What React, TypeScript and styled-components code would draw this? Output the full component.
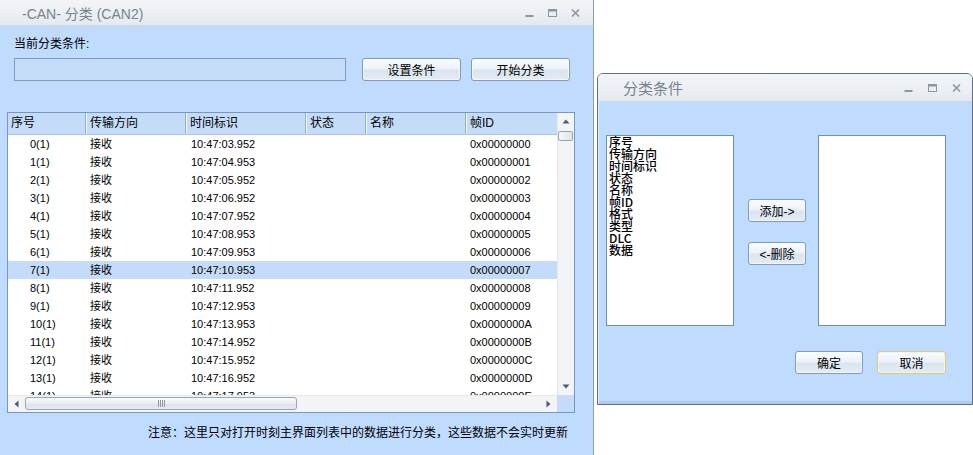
import styled, { createGlobalStyle } from "styled-components"

const GlobalStyle = createGlobalStyle`
  body {
    margin: 0;
    background: #fff;
    font-family: "Liberation Sans", "Noto Sans CJK SC", sans-serif;
  }
`

const Desktop = styled.div`
  display: flex;
  align-items: flex-start;
  width: 973px;
  height: 455px;
  overflow: hidden;
`

const MainWindow = styled.div`
  width: 593px;
  flex-shrink: 0;
  border-right: 1px solid #8f9cac;
  box-shadow: inset -1px 0 #dde4ec;
`

const TitleBar = styled.div<{ $h: number; $pl: number; $pr: number }>`
  height: ${p => p.$h}px;
  display: flex;
  align-items: center;
  padding: 0 ${p => p.$pr}px 0 ${p => p.$pl}px;
  background: linear-gradient(#f3f5f8, #e5e9ef);
  border-bottom: 1px solid #ccd9e8;
`

const TitleText = styled.div<{ $size: number }>`
  flex: 1;
  color: #77838f;
  font-size: ${p => p.$size}px;
`

const Controls = styled.div<{ $gap: number }>`
  display: flex;
  align-items: center;
  gap: ${p => p.$gap}px;
`

const Ctl = styled.svg`
  display: block;
  width: 11px;
  height: 10px;
`

const WinControls = ({ gap }: { gap: number }) => (
  <Controls $gap={gap}>
    <Ctl viewBox="0 0 11 10">
      <rect x="1.5" y="7" width="8" height="2" fill="#8a96a4" />
    </Ctl>
    <Ctl viewBox="0 0 11 10">
      <rect x="1.5" y="1.5" width="8" height="7" fill="none" stroke="#8a96a4" />
      <rect x="1" y="1" width="9" height="2.5" fill="#8a96a4" />
    </Ctl>
    <Ctl viewBox="0 0 11 10">
      <path d="M2 1.5 L9 8.5 M9 1.5 L2 8.5" stroke="#8a96a4" strokeWidth="1.6" />
    </Ctl>
  </Controls>
)

const MainBody = styled.div`
  position: relative;
  height: 444px;
  background: #bfdbfe;
  padding: 11px 0 0 7px;
  box-sizing: border-box;
`

const Label = styled.div`
  margin-left: 7px;
  font-size: 12px;
  line-height: 14px;
  color: #000;
`

const TopRow = styled.div`
  display: flex;
  align-items: center;
  margin: 7px 0 0 7px;
`

const ConditionInput = styled.div`
  width: 332px;
  height: 23px;
  box-sizing: border-box;
  border: 1px solid #7b9cc6;
  background: #c6ddfa;
  margin-right: 16px;
`

const Button = styled.button<{ $w: number; $focus?: boolean; $ml?: number }>`
  width: ${p => p.$w}px;
  height: 23px;
  margin-left: ${p => p.$ml ?? 0}px;
  padding: 0;
  box-sizing: border-box;
  border: 1px solid ${p => (p.$focus ? "#dcc98a" : "#7f9bbf")};
  border-radius: 3px;
  background: linear-gradient(#fafcfe 0%, #edf2f8 45%, #dae4f0 55%, #e4ebf4 100%);
  box-shadow: inset 0 0 0 1px ${p => (p.$focus ? "#fbf3d6" : "rgba(255,255,255,0.6)")};
  font-family: "Liberation Sans", "Noto Sans CJK SC", sans-serif;
  font-size: 12px;
  color: #000;
`

const ListBox = styled.div`
  margin-top: 31px;
  width: 568px;
  height: 301px;
  box-sizing: border-box;
  border: 1px solid #7896bf;
  background: #fff;
  display: grid;
  grid-template-columns: 1fr 17px;
  grid-template-rows: 1fr 17px;
`

const TableArea = styled.div`
  overflow: hidden;
`

const HeaderRow = styled.div`
  display: flex;
  height: 22px;
  box-sizing: border-box;
  background: #c5dcf8;
  border-bottom: 1px solid #aac3e2;
`

const HeaderCell = styled.div<{ $w: number }>`
  flex: 0 0 ${p => p.$w}px;
  box-sizing: border-box;
  padding-left: 3px;
  font-size: 12px;
  line-height: 21px;
  color: #000;
  box-shadow: inset -1px 0 #f4f8fd, inset -2px 0 #8fadd3;
  white-space: nowrap;
`

const Row = styled.div<{ $sel?: boolean }>`
  display: flex;
  height: 18px;
  background: ${p => (p.$sel ? "#c4dcfa" : "transparent")};
`

const Cell = styled.div<{ $w: number; $pl: number }>`
  flex: 0 0 ${p => p.$w}px;
  box-sizing: border-box;
  padding-left: ${p => p.$pl}px;
  font-size: 11px;
  line-height: 18px;
  color: #000;
  white-space: nowrap;
`

const VScroll = styled.div`
  display: flex;
  flex-direction: column;
  background: #f3f4f6;
  box-shadow: inset 1px 0 #e6e8eb;
`

const ArrowBox = styled.div`
  flex: 0 0 17px;
  height: 17px;
  display: flex;
  align-items: center;
  justify-content: center;
`

const VThumb = styled.div`
  margin: 1px 1px 0;
  height: 8px;
  border: 1px solid #98a5b6;
  border-radius: 2px;
  background: linear-gradient(90deg, #f7f8fa, #dfe4ea);
`

const Track = styled.div`
  flex: 1;
`

const HScroll = styled.div`
  display: flex;
  align-items: center;
  background: #f3f4f6;
  box-shadow: inset 0 1px #e6e8eb;
`

const HThumb = styled.div`
  width: 272px;
  height: 13px;
  box-sizing: border-box;
  border: 1px solid #98a5b6;
  border-radius: 3px;
  background: linear-gradient(#f9fafb, #e9edf1 50%, #dde2e8 51%, #e6eaee);
  display: flex;
  align-items: center;
  justify-content: center;
`

const Corner = styled.div`
  background: #c4dcf9;
`

const Footer = styled.div`
  margin-top: 13px;
  padding-right: 25px;
  text-align: right;
  font-size: 12px;
  line-height: 14px;
  color: #000;
`

const Grip = styled.svg`
  position: absolute;
  right: 5px;
  bottom: 1px;
  width: 10px;
  height: 10px;
`

const Dialog = styled.div`
  margin: 73px 0 0 3px;
  width: 376px;
  height: 332px;
  flex-shrink: 0;
  box-sizing: border-box;
  border: 1px solid #5e6e84;
  border-radius: 6px 6px 0 0;
  overflow: hidden;
  display: flex;
  flex-direction: column;
`

const DialogBody = styled.div`
  flex: 1;
  background: #bfdbfe;
  padding: 33px 26px 0 8px;
  box-shadow: inset 1px 0 #dfeafb, inset 0 -3px #aecbef;
`

const PickRow = styled.div`
  display: flex;
  align-items: flex-start;
`

const PickList = styled.div`
  width: 128px;
  height: 191px;
  box-sizing: border-box;
  border: 1px solid #6f90b8;
  background: #fff;
  padding: 0 0 0 2px;
`

const PickItem = styled.div`
  font-family: "Noto Sans CJK SC", "Liberation Sans", sans-serif;
  font-size: 12px;
  line-height: 12px;
  font-weight: 500;
  color: #000;
  white-space: nowrap;
`

const MidButtons = styled.div`
  display: flex;
  flex-direction: column;
  gap: 20px;
  padding-top: 64px;
  margin: 0 12px 0 14px;
`

const BottomRow = styled.div`
  display: flex;
  justify-content: flex-end;
  gap: 14px;
  margin-top: 25px;
`

const Triangle = ({ dir }: { dir: "up" | "down" | "left" | "right" }) => {
  const pts = {
    up: "0.5,4.5 4,0.5 7.5,4.5",
    down: "0.5,0.5 4,4.5 7.5,0.5",
    left: "4.5,0.5 0.5,4 4.5,7.5",
    right: "0.5,0.5 4.5,4 0.5,7.5",
  }[dir]
  const vertical = dir === "up" || dir === "down"
  return (
    <svg width={vertical ? 8 : 5} height={vertical ? 5 : 8}>
      <polygon points={pts} fill="#4b5c79" />
    </svg>
  )
}

const columns = [
  { title: "序号", w: 79 },
  { title: "传输方向", w: 100 },
  { title: "时间标识", w: 120 },
  { title: "状态", w: 60 },
  { title: "名称", w: 100 },
  { title: "帧ID", w: 100 },
]

const ms = [952, 953, 952, 952, 952, 953, 953, 953, 952, 953, 953, 952, 952, 952, 953]
const rows = ms.map((m, i) => ({
  no: `${i}(1)`,
  dir: "接收",
  time: `10:47:${String(3 + i).padStart(2, "0")}.${m}`,
  id: "0x" + i.toString(16).toUpperCase().padStart(8, "0"),
}))

const fields = ["序号", "传输方向", "时间标识", "状态", "名称", "帧ID", "格式", "类型", "DLC", "数据"]

export default function App() {
  return (
    <>
      <GlobalStyle />
      <Desktop>
        <MainWindow>
          <TitleBar $h={25} $pl={22} $pr={12}>
            <TitleText $size={14}>-CAN- 分类 (CAN2)</TitleText>
            <WinControls gap={12} />
          </TitleBar>
          <MainBody>
            <Label>当前分类条件:</Label>
            <TopRow>
              <ConditionInput />
              <Button $w={99}>设置条件</Button>
              <Button $w={99} $ml={10}>开始分类</Button>
            </TopRow>
            <ListBox>
              <TableArea>
                <HeaderRow>
                  {columns.map(c => (
                    <HeaderCell key={c.title} $w={c.w}>{c.title}</HeaderCell>
                  ))}
                </HeaderRow>
                {rows.map((r, i) => (
                  <Row key={i} $sel={i === 7}>
                    <Cell $w={79} $pl={22}>{r.no}</Cell>
                    <Cell $w={100} $pl={3}>{r.dir}</Cell>
                    <Cell $w={120} $pl={4}>{r.time}</Cell>
                    <Cell $w={60} $pl={3} />
                    <Cell $w={100} $pl={3} />
                    <Cell $w={100} $pl={3}>{r.id}</Cell>
                  </Row>
                ))}
              </TableArea>
              <VScroll>
                <ArrowBox><Triangle dir="up" /></ArrowBox>
                <VThumb />
                <Track />
                <ArrowBox><Triangle dir="down" /></ArrowBox>
              </VScroll>
              <HScroll>
                <ArrowBox><Triangle dir="left" /></ArrowBox>
                <HThumb>
                  <svg width="7" height="7">
                    <path d="M0.5 0V7M2.5 0V7M4.5 0V7M6.5 0V7" stroke="#8e99a7" />
                  </svg>
                </HThumb>
                <Track />
                <ArrowBox><Triangle dir="right" /></ArrowBox>
              </HScroll>
              <Corner />
            </ListBox>
            <Footer>注意：这里只对打开时刻主界面列表中的数据进行分类，这些数据不会实时更新</Footer>
            <Grip viewBox="0 0 10 10">
              <rect x="7" y="1" width="2" height="2" fill="#9fb3cc" />
              <rect x="4" y="4" width="2" height="2" fill="#9fb3cc" />
              <rect x="7" y="4" width="2" height="2" fill="#9fb3cc" />
              <rect x="1" y="7" width="2" height="2" fill="#9fb3cc" />
              <rect x="4" y="7" width="2" height="2" fill="#9fb3cc" />
              <rect x="7" y="7" width="2" height="2" fill="#9fb3cc" />
            </Grip>
          </MainBody>
        </MainWindow>

        <Dialog>
          <TitleBar $h={27} $pl={25} $pr={10}>
            <TitleText $size={15}>分类条件</TitleText>
            <WinControls gap={13} />
          </TitleBar>
          <DialogBody>
            <PickRow>
              <PickList>
                {fields.map(f => (
                  <PickItem key={f}>{f}</PickItem>
                ))}
              </PickList>
              <MidButtons>
                <Button $w={58}>添加-&gt;</Button>
                <Button $w={58}>&lt;-删除</Button>
              </MidButtons>
              <PickList />
            </PickRow>
            <BottomRow>
              <Button $w={68}>确定</Button>
              <Button $w={69} $focus>取消</Button>
            </BottomRow>
          </DialogBody>
        </Dialog>
      </Desktop>
    </>
  )
}
